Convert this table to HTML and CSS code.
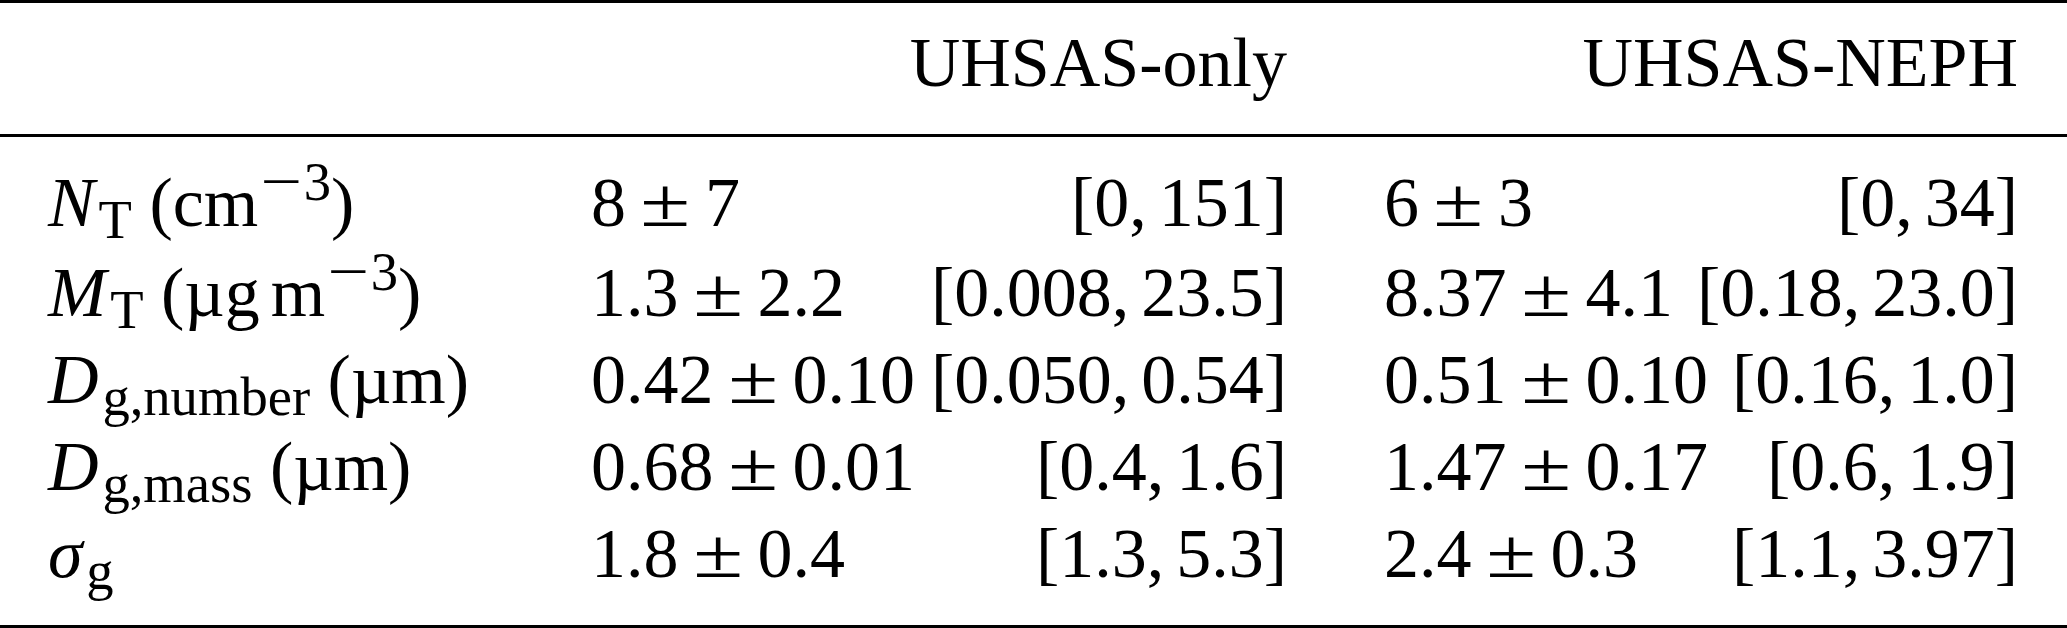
FILE: index.html
```html
<!DOCTYPE html>
<html lang="en">
<head>
<meta charset="utf-8">
<title>UHSAS table</title>
<link rel="stylesheet" href="styles.css">
</head>
<body>
<div class="table">
  <div class="row head">
    <div class="cell"></div>
    <div class="cell right">UHSAS-only</div>
    <div class="cell right">UHSAS-NEPH</div>
  </div>
  <div class="body">
    <div class="row">
      <div class="cell"><i>N</i><sub>T</sub> (cm<sup><span class="minus">−</span>3</sup>)</div>
      <div class="cell pair"><span>8<span class="pm">±</span>7</span><span class="rng">[0, 151]</span></div>
      <div class="cell pair"><span>6<span class="pm">±</span>3</span><span class="rng">[0, 34]</span></div>
    </div>
    <div class="row tall">
      <div class="cell"><i>M</i><sub>T</sub> (µg<span class="thin"></span>m<sup><span class="minus">−</span>3</sup>)</div>
      <div class="cell pair"><span>1.3<span class="pm">±</span>2.2</span><span class="rng">[0.008, 23.5]</span></div>
      <div class="cell pair"><span>8.37<span class="pm">±</span>4.1</span><span class="rng">[0.18, 23.0]</span></div>
    </div>
    <div class="row">
      <div class="cell"><i>D</i><sub>g,number</sub> (µm)</div>
      <div class="cell pair"><span>0.42<span class="pm">±</span>0.10</span><span class="rng">[0.050, 0.54]</span></div>
      <div class="cell pair"><span>0.51<span class="pm">±</span>0.10</span><span class="rng">[0.16, 1.0]</span></div>
    </div>
    <div class="row">
      <div class="cell"><i>D</i><sub>g,mass</sub> (µm)</div>
      <div class="cell pair"><span>0.68<span class="pm">±</span>0.01</span><span class="rng">[0.4, 1.6]</span></div>
      <div class="cell pair"><span>1.47<span class="pm">±</span>0.17</span><span class="rng">[0.6, 1.9]</span></div>
    </div>
    <div class="row">
      <div class="cell"><i>σ</i><sub>g</sub></div>
      <div class="cell pair"><span>1.8<span class="pm">±</span>0.4</span><span class="rng">[1.3, 5.3]</span></div>
      <div class="cell pair"><span>2.4<span class="pm">±</span>0.3</span><span class="rng">[1.1, 3.97]</span></div>
    </div>
  </div>
</div>
</body>
</html>
```
FILE: styles.css
```css
html, body {
  margin: 0;
  padding: 0;
  background: #ffffff;
}

body {
  font-family: "Liberation Serif", "Times New Roman", serif;
  font-size: 70px;
  color: #000000;
}

.table {
  width: 2067px;
  border-top: 3px solid #000000;
  border-bottom: 3px solid #000000;
}

.row {
  display: grid;
  grid-template-columns: 446px 696px 634px;
  column-gap: 97px;
  padding: 0 48px 0 48px;
  line-height: 87px;
  height: 87px;
  white-space: nowrap;
}

.head {
  line-height: 84px;
  height: 84px;
  padding-top: 18px;
  padding-bottom: 29px;
  border-bottom: 3px solid #000000;
}

.body {
  padding-top: 22px;
  padding-bottom: 28px;
}

.tall {
  padding-top: 3px;
}

.right {
  text-align: right;
}

.pair {
  display: flex;
  justify-content: space-between;
}

.rng {
  word-spacing: -0.08em;
}

.pm {
  display: inline-block;
  transform: scaleX(1.3);
  margin: 0 0.29em;
}

.thin {
  display: inline-block;
  width: 0.16em;
}

i {
  font-style: italic;
}

sub, sup {
  font-size: 0.78em;
  line-height: 0;
}

sub {
  vertical-align: -0.22em;
  margin-left: 0.07em;
}

sup {
  vertical-align: 0.47em;
  margin-left: 0.03em;
}

.minus {
  display: inline-block;
  transform: scaleX(1.35);
  margin: 0 0.12em;
}
```
